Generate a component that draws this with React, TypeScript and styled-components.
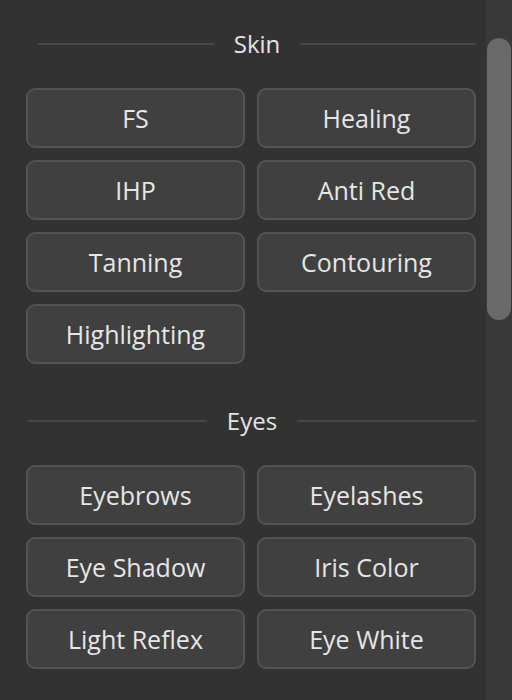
import React from "react";
import styled, { createGlobalStyle } from "styled-components";

const GlobalStyle = createGlobalStyle`
  html, body {
    margin: 0;
    padding: 0;
    background: #323232;
  }
  body {
    font-family: "Open Sans", "Lato", sans-serif;
  }
`;

const Panel = styled.div`
  display: flex;
  flex-direction: row;
  width: 512px;
  height: 700px;
  overflow: hidden;
  background: #323232;
`;

const Content = styled.div`
  flex: 1;
  display: flex;
  flex-direction: column;
  padding: 32px 10px 0 26px;
`;

const Section = styled.section`
  display: flex;
  flex-direction: column;
  margin-bottom: 45px;
`;

const SectionHeader = styled.div<{ $inset: number }>`
  display: flex;
  flex-direction: row;
  align-items: center;
  gap: 20px;
  height: 24px;
  padding-left: ${(p) => p.$inset}px;
  margin-bottom: 32px;
`;

const HeaderLine = styled.div`
  flex: 1;
  height: 2px;
  background: #484848;
`;

const HeaderText = styled.span`
  font-size: 24px;
  color: #e4e4e4;
  line-height: 24px;
`;

const ButtonGrid = styled.div`
  display: grid;
  grid-template-columns: 219px 219px;
  grid-auto-rows: 60px;
  column-gap: 12px;
  row-gap: 12px;
`;

const ToolButton = styled.button`
  box-sizing: border-box;
  display: flex;
  align-items: center;
  justify-content: center;
  background: #404040;
  border: 2px solid #535353;
  border-radius: 9px;
  color: #e6e6e6;
  font-family: "Open Sans", "Lato", sans-serif;
  font-size: 25px;
  font-variant-ligatures: none;
  padding: 0;
  cursor: pointer;
`;

const ScrollTrack = styled.div`
  width: 26px;
  display: flex;
  flex-direction: column;
  align-items: center;
  padding-top: 38px;
  background: #393939;
`;

const ScrollThumb = styled.div`
  width: 24px;
  height: 282px;
  border-radius: 12px;
  background: #696969;
`;

const sections = [
  {
    title: "Skin",
    inset: 12,
    items: ["FS", "Healing", "IHP", "Anti Red", "Tanning", "Contouring", "Highlighting"],
  },
  {
    title: "Eyes",
    inset: 2,
    items: ["Eyebrows", "Eyelashes", "Eye Shadow", "Iris Color", "Light Reflex", "Eye White"],
  },
];

export default function App() {
  return (
    <>
      <GlobalStyle />
      <Panel>
        <Content>
          {sections.map((section) => (
            <Section key={section.title}>
              <SectionHeader $inset={section.inset}>
                <HeaderLine />
                <HeaderText>{section.title}</HeaderText>
                <HeaderLine />
              </SectionHeader>
              <ButtonGrid>
                {section.items.map((item) => (
                  <ToolButton key={item}>{item}</ToolButton>
                ))}
              </ButtonGrid>
            </Section>
          ))}
        </Content>
        <ScrollTrack>
          <ScrollThumb />
        </ScrollTrack>
      </Panel>
    </>
  );
}
